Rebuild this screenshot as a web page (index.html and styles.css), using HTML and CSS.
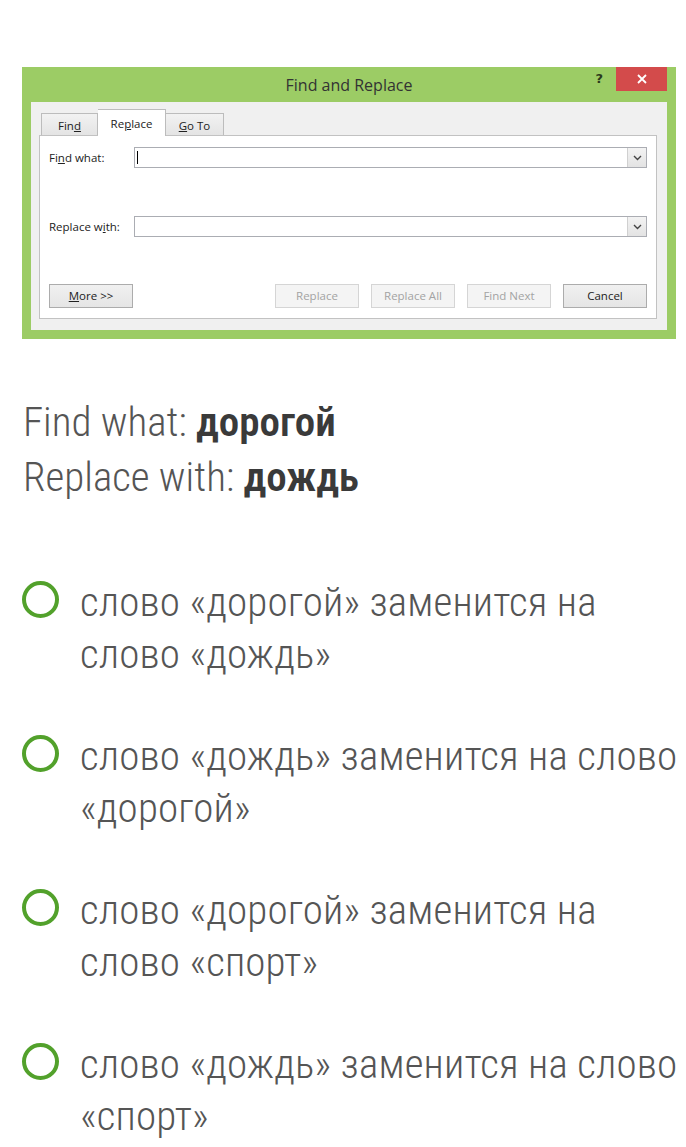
FILE: index.html
```html
<!DOCTYPE html>
<html lang="ru">
<head>
<meta charset="utf-8">
<title>Find and Replace</title>
<link rel="stylesheet" href="styles.css">
</head>
<body>
<div class="dialog">
  <div class="titlebar">
    <div class="title">Find and Replace</div>
    <div class="controls">
      <span class="help">?</span>
      <span class="close"><svg width="12" height="12" viewBox="0 0 12 12"><path d="M2 2 L10 10 M10 2 L2 10" stroke="#fff" stroke-width="1.8" fill="none"/></svg></span>
    </div>
  </div>
  <div class="panel">
    <div class="tabs">
      <div class="tab tab-find">Fin<u>d</u></div>
      <div class="tab tab-active">Re<u>p</u>lace</div>
      <div class="tab tab-goto"><u>G</u>o To</div>
    </div>
    <div class="box">
      <div class="row">
        <span class="label">Fi<u>n</u>d what:</span>
        <div class="input"><span class="caret"></span><span class="dd"><svg width="9" height="6" viewBox="0 0 9 6"><path d="M1 1 L4.5 4.5 L8 1" stroke="#444" stroke-width="1.4" fill="none"/></svg></span></div>
      </div>
      <div class="row row-replace">
        <span class="label">Replace w<u>i</u>th:</span>
        <div class="input"><span class="dd"><svg width="9" height="6" viewBox="0 0 9 6"><path d="M1 1 L4.5 4.5 L8 1" stroke="#444" stroke-width="1.4" fill="none"/></svg></span></div>
      </div>
      <div class="buttons">
        <span class="btn"><u>M</u>ore &gt;&gt;</span>
        <span class="spacer"></span>
        <span class="btn btn-off">Replace</span>
        <span class="btn btn-off">Replace All</span>
        <span class="btn btn-off">Find Next</span>
        <span class="btn">Cancel</span>
      </div>
    </div>
  </div>
</div>

<div class="question">
  <div>Find what: <b>дорогой</b></div>
  <div>Replace with: <b>дождь</b></div>
</div>

<ul class="options">
  <li class="option"><span class="radio"></span><span class="otext">слово «дорогой» заменится на слово «дождь»</span></li>
  <li class="option"><span class="radio"></span><span class="otext">слово «дождь» заменится на слово «дорогой»</span></li>
  <li class="option"><span class="radio"></span><span class="otext">слово «дорогой» заменится на слово «спорт»</span></li>
  <li class="option"><span class="radio"></span><span class="otext">слово «дождь» заменится на слово «спорт»</span></li>
</ul>
</body>
</html>
```

FILE: styles.css
```css
html, body {
  margin: 0;
  padding: 0;
  background: #ffffff;
}

body {
  width: 686px;
  overflow: hidden;
}

.dialog {
  margin: 67px 0 0 22px;
  width: 654px;
  height: 272px;
  box-sizing: border-box;
  padding: 0 9px 9px;
  background: #9ccc65;
  font-family: "Open Sans", "Noto Sans", sans-serif;
  color: #222;
}

.titlebar {
  height: 35px;
  display: grid;
  grid-template-columns: 1fr auto 1fr;
  align-items: start;
}

.title {
  grid-column: 2;
  font-size: 16px;
  line-height: 36px;
  color: #333;
}

.controls {
  grid-column: 3;
  display: flex;
  justify-content: flex-end;
  align-items: flex-start;
}

.help {
  font-family: "DejaVu Sans", sans-serif;
  font-weight: bold;
  font-size: 13px;
  line-height: 24px;
  color: #2b3a1c;
  margin-right: 13px;
}

.close {
  width: 51px;
  height: 24px;
  background: #d34b4b;
  display: flex;
  align-items: center;
  justify-content: center;
}

.panel {
  height: 228px;
  box-sizing: border-box;
  background: #f0f0f0;
  padding: 8px 10px 11px 8px;
}

.tabs {
  display: flex;
  align-items: flex-end;
  height: 25px;
  padding-left: 2px;
}

.tab {
  height: 22px;
  box-sizing: border-box;
  border: 1px solid #bcbcbc;
  border-bottom: none;
  background: linear-gradient(#f2f2f2, #e4e4e4);
  font-size: 11.5px;
  line-height: 23px;
  text-align: center;
  color: #222;
}

.tab-find { width: 57px; }
.tab-goto { width: 58px; border-left: none; }

.tab-active {
  width: 68px;
  height: 27px;
  line-height: 27px;
  background: #ffffff;
  border-left: none;
  margin-bottom: -1px;
  position: relative;
  z-index: 1;
}

.box {
  height: 184px;
  box-sizing: border-box;
  border: 1px solid #c2c2c2;
  background: #ffffff;
  padding: 11px 9px 10px 9px;
  display: flex;
  flex-direction: column;
}

.row {
  display: flex;
  align-items: center;
  height: 21px;
}

.row-replace { margin-top: 48px; }

.label {
  width: 85px;
  flex: none;
  font-size: 11.5px;
  color: #222;
}

.input {
  flex: 1;
  height: 21px;
  box-sizing: border-box;
  border: 1px solid #abadb3;
  display: flex;
  align-items: center;
  justify-content: space-between;
  padding-left: 2px;
}

.caret {
  width: 1px;
  height: 13px;
  background: #000;
}

.dd {
  margin-left: auto;
  width: 19px;
  height: 19px;
  box-sizing: border-box;
  border-left: 1px solid #d0d0d0;
  background: linear-gradient(#f3f3f3, #e3e3e3);
  display: flex;
  align-items: center;
  justify-content: center;
}

.buttons {
  margin-top: 47px;
  display: flex;
  gap: 12px;
}

.spacer { flex: 1; }

.btn {
  width: 84px;
  height: 24px;
  box-sizing: border-box;
  border: 1px solid #acacac;
  background: linear-gradient(#f0f0f0, #e5e5e5);
  font-size: 11.5px;
  line-height: 22px;
  text-align: center;
  color: #222;
}

.btn-off {
  border-color: #d5d5d5;
  background: #f4f4f4;
  color: #a3a3a3;
}

.question {
  margin: 56px 0 0 23px;
  font-family: Roboto, "Liberation Sans", sans-serif;
  font-weight: 300;
  font-stretch: 87.5%;
  font-size: 41px;
  line-height: 55px;
  color: #555;
}

.question b {
  font-weight: 600;
  color: #3a3a3a;
}

.options {
  list-style: none;
  margin: 71px 0 0 0;
  padding: 0 0 0 22px;
  display: flex;
  flex-direction: column;
  gap: 50px;
}

.option {
  display: flex;
  align-items: flex-start;
  gap: 21px;
}

.radio {
  flex: none;
  width: 37px;
  height: 37px;
  box-sizing: border-box;
  border: 4px solid #52a12b;
  border-radius: 50%;
  margin-top: 5px;
}

.otext {
  font-family: Roboto, "Liberation Sans", sans-serif;
  font-weight: 300;
  font-stretch: 87.5%;
  font-size: 41px;
  letter-spacing: 0.15px;
  line-height: 52px;
  color: #555;
}
```
